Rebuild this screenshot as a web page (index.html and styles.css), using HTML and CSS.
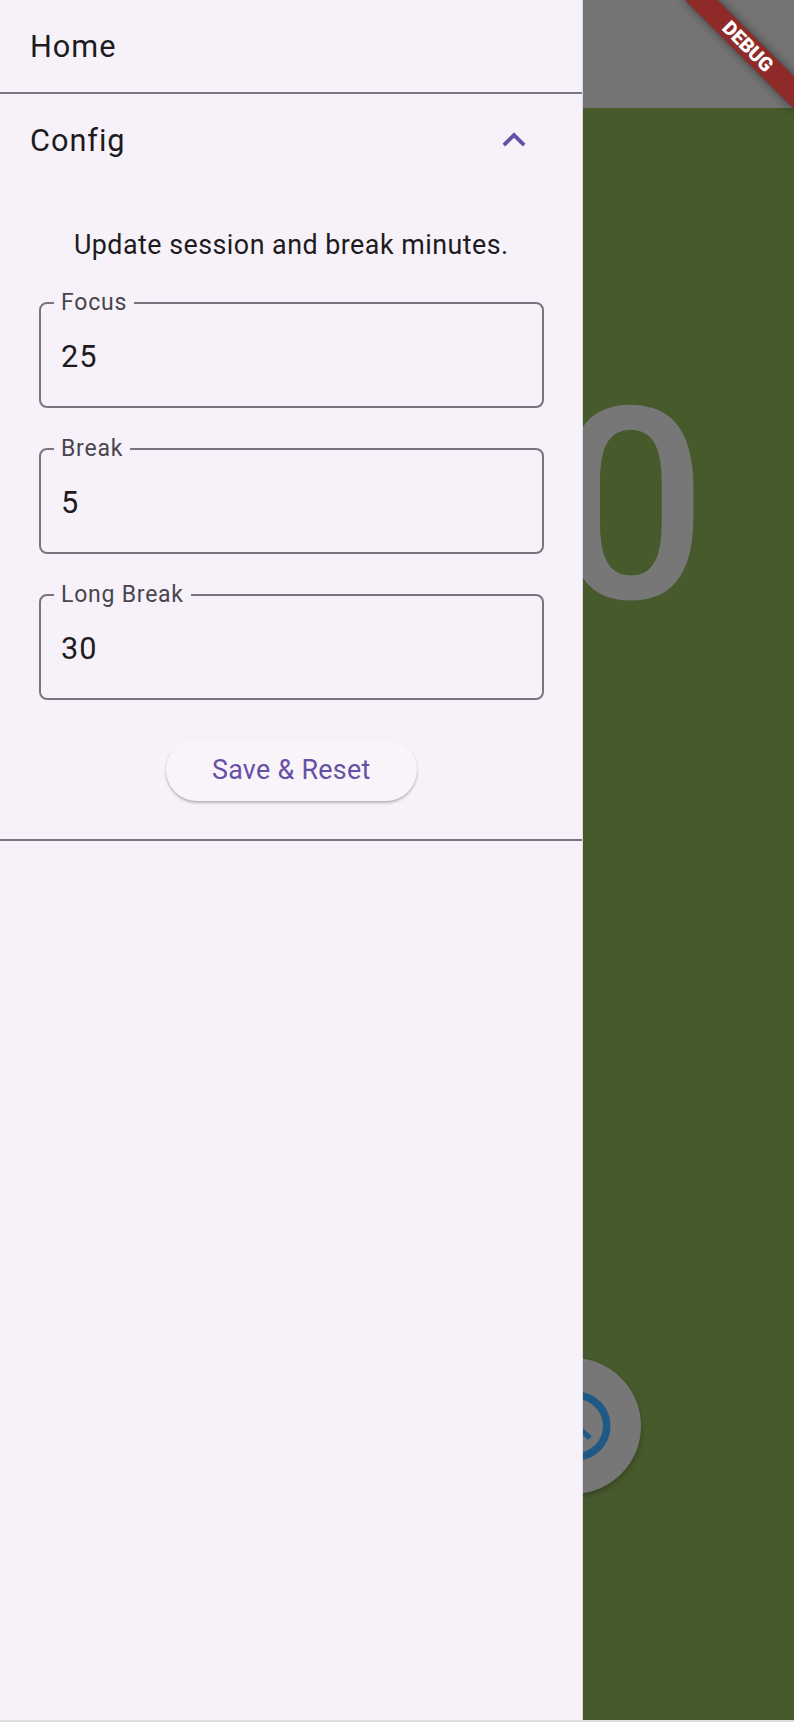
FILE: index.html
```html
<!DOCTYPE html>
<html lang="en">
<head>
<meta charset="utf-8">
<title>Pomodoro</title>
<link rel="stylesheet" href="styles.css">
</head>
<body>
<div class="screen">
  <div class="app">
    <header class="appbar"></header>
    <main class="content">
      <div class="timer">0</div>
      <button class="fab" aria-label="Reset">
        <svg width="136" height="136" viewBox="0 0 136 136">
          <circle cx="71" cy="68" r="30.75" fill="none" stroke="#1f5a86" stroke-width="7.5"/>
          <line x1="71" y1="68" x2="85" y2="80" stroke="#1f5a86" stroke-width="5.5"/>
        </svg>
      </button>
    </main>
  </div>

  <nav class="drawer">
    <div class="tile home">Home</div>
    <section class="expansion">
      <div class="tile header">
        <span>Config</span>
        <svg class="chevron" width="46" height="46" viewBox="0 0 24 24">
          <path d="M12 8l-6 6 1.41 1.41L12 10.83l4.59 4.58L18 14z" fill="#6750a4"/>
        </svg>
      </div>
      <div class="panel">
        <p class="desc">Update session and break minutes.</p>
        <div class="field"><span class="label">Focus</span><span class="value">25</span></div>
        <div class="field"><span class="label">Break</span><span class="value">5</span></div>
        <div class="field"><span class="label">Long Break</span><span class="value">30</span></div>
        <button class="save">Save &amp; Reset</button>
      </div>
    </section>
  </nav>

  <div class="banner"><span>DEBUG</span></div>
  <div class="bottom-line"></div>
</div>
</body>
</html>
```

FILE: styles.css
```css
html, body {
  margin: 0;
  padding: 0;
}

body {
  font-family: Roboto, "Noto Sans", "Liberation Sans", sans-serif;
}

.screen {
  position: relative;
  width: 794px;
  height: 1722px;
  overflow: hidden;
  background: #465a2c;
}

.app {
  display: flex;
  flex-direction: column;
  height: 100%;
}

.appbar {
  flex: none;
  height: 108px;
  background: #767576;
}

.content {
  flex: 1;
  position: relative;
  background: #465a2c;
}

.timer {
  margin-top: 264px;
  padding-right: 87px;
  text-align: right;
  font-size: 268px;
  line-height: 1;
  font-weight: 500;
  color: #777777;
  white-space: nowrap;
}

.fab {
  position: absolute;
  left: 505px;
  top: 1250px;
  width: 136px;
  height: 136px;
  padding: 0;
  border: none;
  border-radius: 50%;
  background: #777777;
  box-shadow: 0 3px 5px rgba(0, 0, 0, 0.25);
}

.fab svg {
  display: block;
}

/* Drawer */
.drawer {
  position: absolute;
  left: 0;
  top: 0;
  bottom: 0;
  width: 582px;
  background: #f7f2f9;
  border-right: 1px solid #dcd8df;
  color: #1d1b20;
}

.tile {
  display: flex;
  align-items: center;
  height: 92px;
  font-size: 30.7px;
  letter-spacing: 0.96px;
  color: #1d1b20;
}

.home {
  padding: 0 30px;
}

.expansion {
  border-top: 2px solid #7a7580;
  border-bottom: 2px solid #7a7580;
}

.header {
  justify-content: space-between;
  padding: 0 45px 0 30px;
}

.chevron {
  display: block;
  flex: none;
}

.panel {
  display: flex;
  flex-direction: column;
  padding: 39.6px 38px 38.3px 38.5px;
}

.desc {
  margin: 0 0 38px;
  text-align: center;
  font-size: 26.85px;
  line-height: 38.4px;
  letter-spacing: 0.48px;
  color: #1d1b20;
}

.field {
  position: relative;
  display: flex;
  align-items: center;
  box-sizing: border-box;
  height: 106px;
  margin-bottom: 40px;
  padding: 3px 20px 0 20.5px;
  border: 2px solid #79747e;
  border-radius: 8px;
}

.field:last-of-type {
  margin-bottom: 39px;
}

.label {
  position: absolute;
  left: 13.5px;
  top: -13.5px;
  padding: 0 7px;
  background: #f7f2f9;
  font-size: 23px;
  line-height: 23px;
  letter-spacing: 0.77px;
  color: #49454f;
}

.value {
  font-size: 30.7px;
  line-height: 46px;
  letter-spacing: 0.96px;
  color: #1d1b20;
}

.save {
  align-self: center;
  height: 62px;
  padding: 0 46px;
  border: none;
  border-radius: 31px;
  background: #f8f4fa;
  color: #6750a4;
  font-family: Roboto, "Noto Sans", sans-serif;
  font-size: 26.85px;
  font-weight: 400;
  letter-spacing: 0.3px;
  box-shadow: 0 2px 3px rgba(0, 0, 0, 0.22), 0 1px 2px rgba(0, 0, 0, 0.08);
}

/* Debug banner */
.banner {
  position: absolute;
  left: 671.2px;
  top: 34.6px;
  width: 153.4px;
  height: 23px;
  transform: rotate(45deg);
  background: #8e2b28;
  box-shadow: 0 0 11px rgba(0, 0, 0, 0.5);
  display: flex;
  align-items: center;
  justify-content: center;
  color: #ffffff;
  font-size: 19.6px;
  line-height: 1;
  font-weight: 900;
}

.bottom-line {
  position: absolute;
  left: 0;
  right: 0;
  bottom: 0;
  height: 2px;
  background: #dddce0;
}
```
